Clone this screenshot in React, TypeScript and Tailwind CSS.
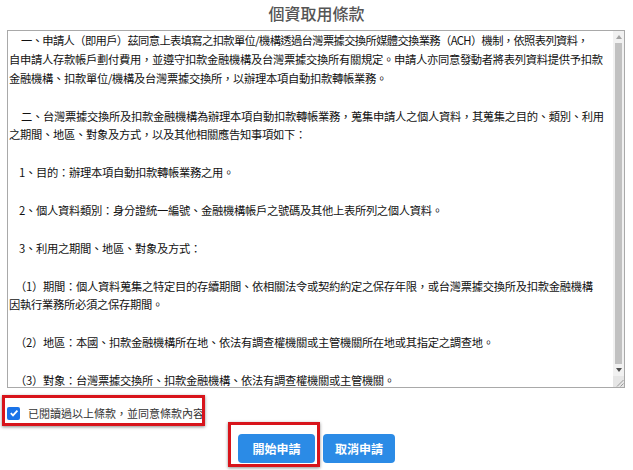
const lines: { text: string; indent?: string }[] = [
  { text: '一、申請人（即用戶）茲同意上表填寫之扣款單位/機構透過台灣票據交換所媒體交換業務（ACH）機制，依照表列資料，', indent: 'pl-[12px] tracking-[-0.65px]' },
  { text: '自申請人存款帳戶劃付費用，並遵守扣款金融機構及台灣票據交換所有關規定。申請人亦同意發動者將表列資料提供予扣款' },
  { text: '金融機構、扣款單位/機構及台灣票據交換所，以辦理本項自動扣款轉帳業務。' },
  { text: '' },
  { text: '二、台灣票據交換所及扣款金融機構為辦理本項自動扣款轉帳業務，蒐集申請人之個人資料，其蒐集之目的、類別、利用', indent: 'pl-[12px]' },
  { text: '之期間、地區、對象及方式，以及其他相關應告知事項如下：' },
  { text: '' },
  { text: '1、目的：辦理本項自動扣款轉帳業務之用。', indent: 'pl-[10px]' },
  { text: '' },
  { text: '2、個人資料類別：身分證統一編號、金融機構帳戶之號碼及其他上表所列之個人資料。', indent: 'pl-[10px]' },
  { text: '' },
  { text: '3、利用之期間、地區、對象及方式：', indent: 'pl-[10px]' },
  { text: '' },
  { text: '（1）期間：個人資料蒐集之特定目的存續期間、依相關法令或契約約定之保存年限，或台灣票據交換所及扣款金融機構', indent: 'pl-[6px]' },
  { text: '因執行業務所必須之保存期間。' },
  { text: '' },
  { text: '（2）地區：本國、扣款金融機構所在地、依法有調查權機關或主管機關所在地或其指定之調查地。', indent: 'pl-[6px]' },
  { text: '' },
  { text: '（3）對象：台灣票據交換所、扣款金融機構、依法有調查權機關或主管機關。', indent: 'pl-[6px]' },
];

function ScrollBar() {
  return (
    <div className="w-[11px] flex flex-col bg-[#f1f1f1]">
      {/* up arrow */}
      <div className="h-[12px] flex items-center justify-center">
        <svg width="6" height="4" viewBox="0 0 6 4">
          <path d="M3 0 L6 4 L0 4 Z" fill="#a3a3a3" />
        </svg>
      </div>
      <div className="flex-1 px-[2px]">
        <div className="h-full bg-[#c1c1c1]" />
      </div>
      {/* down arrow */}
      <div className="h-[12px] flex items-center justify-center">
        <svg width="6" height="4" viewBox="0 0 6 4">
          <path d="M0 0 L6 0 L3 4 Z" fill="#505050" />
        </svg>
      </div>
      {/* resize grip */}
      <div className="h-[11px] flex items-end justify-end bg-[#e6e6e6]">
        <svg width="9" height="9" viewBox="0 0 9 9">
          <path d="M8.5 2 L2 8.5 M8.5 5.5 L5.5 8.5" stroke="#9a9a9a" strokeWidth="1" />
        </svg>
      </div>
    </div>
  );
}

export default function App() {
  return (
    <div className="w-[633px] h-[470px] bg-white overflow-hidden font-['Noto_Sans_CJK_TC',sans-serif]">
      <h1 className="h-[30px] pt-[3px] text-center text-[16px] leading-[20px] font-medium text-[#555]">
        個資取用條款
      </h1>

      {/* terms box */}
      <div className="ml-[7px] w-[618px] h-[358px] border border-[#a9a9a9] flex">
        <div className="flex-1 overflow-hidden pl-[1px] text-[11.3px] leading-[18.9px] tracking-[-0.3px] text-[#111]">
          {lines.map((l, i) => (
            <div key={i} className={`h-[18.9px] whitespace-nowrap ${l.indent ?? ''}`}>
              {l.text}
            </div>
          ))}
        </div>
        <ScrollBar />
      </div>

      {/* agree checkbox */}
      <div className="mt-[15px] ml-[7px] h-[20px] flex">
        <label className="relative flex items-center">
          <span className="w-[13px] h-[13px] rounded-[2px] bg-[#1a73e8] flex items-center justify-center">
            <svg width="10" height="10" viewBox="0 0 10 10">
              <path d="M1.8 5.2 L4 7.4 L8.4 2.6" fill="none" stroke="white" strokeWidth="1.8" />
            </svg>
          </span>
          <span className="ml-[8px] text-[11px] text-[#333]">已閱讀過以上條款，並同意條款內容</span>
          <span className="absolute left-[-5px] right-[-1px] top-[-8px] bottom-[-3px] border-[3px] border-[#d8141b] shadow-[0_1px_3px_rgba(0,0,0,0.45)]" />
        </label>
      </div>

      {/* actions */}
      <div className="mt-[11px] flex justify-center gap-[8px]">
        <button className="relative w-[77px] h-[29px] rounded-[4px] bg-[#2b8be6] text-white text-[12px] font-bold">
          開始申請
          <span className="absolute left-[-10px] right-[-5px] top-[-12px] bottom-[-4px] border-[3px] border-[#d8141b] shadow-[0_1px_3px_rgba(0,0,0,0.45)]" />
        </button>
        <button className="w-[72px] h-[29px] rounded-[4px] bg-[#2b8be6] text-white text-[12px] font-bold">
          取消申請
        </button>
      </div>
    </div>
  );
}
